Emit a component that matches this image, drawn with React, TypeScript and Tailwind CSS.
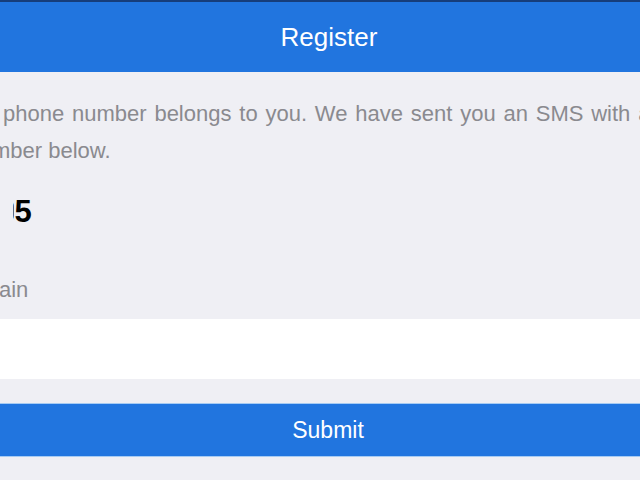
export default function App() {
  return (
    <div className="w-[640px] h-[480px] overflow-hidden bg-[#efeff4] flex flex-col" style={{ fontFamily: '"Liberation Sans", Arial, sans-serif' }}>
      <header className="h-[72px] shrink-0 bg-[#2175df] border-t-2 border-[#163d7a] flex items-center justify-center pl-[18px]">
        <h1 className="text-[26px] text-white leading-none">Register</h1>
      </header>
      <div className="pt-[23px] text-[22px] leading-[37px] text-[#8a8a8f] whitespace-nowrap">
        <div className="pl-[3px] [word-spacing:1.7px]">phone number belongs to you. We have sent you an SMS with a code</div>
        <div className="ml-[-8px]">mber below.</div>
      </div>
      <div className="mt-[24px] h-[36px] flex items-center whitespace-nowrap">
        <div className="w-[12.5px] shrink-0" />
        <span className="inline-block w-[1.5px] overflow-hidden shrink-0 text-[31px] font-bold text-[#5a6a80] leading-none">
          <span className="inline-block ml-[-14px]">0</span>
        </span>
        <span className="ml-[0.5px] text-[31px] font-bold text-black leading-none">5</span>
      </div>
      <div className="mt-[46px] h-[30px] flex items-center text-[22px] text-[#8a8a8f] leading-none whitespace-nowrap">
        <span className="ml-[-1px]">ain</span>
      </div>
      <div className="mt-[14px] h-[60px] bg-white shrink-0" />
      <button className="mt-[24px] h-[54px] shrink-0 w-full bg-[#2175df] border-y border-[#a6cbf3] text-white text-[23px] flex items-center justify-center pl-[16px]">
        Submit
      </button>
    </div>
  );
}
